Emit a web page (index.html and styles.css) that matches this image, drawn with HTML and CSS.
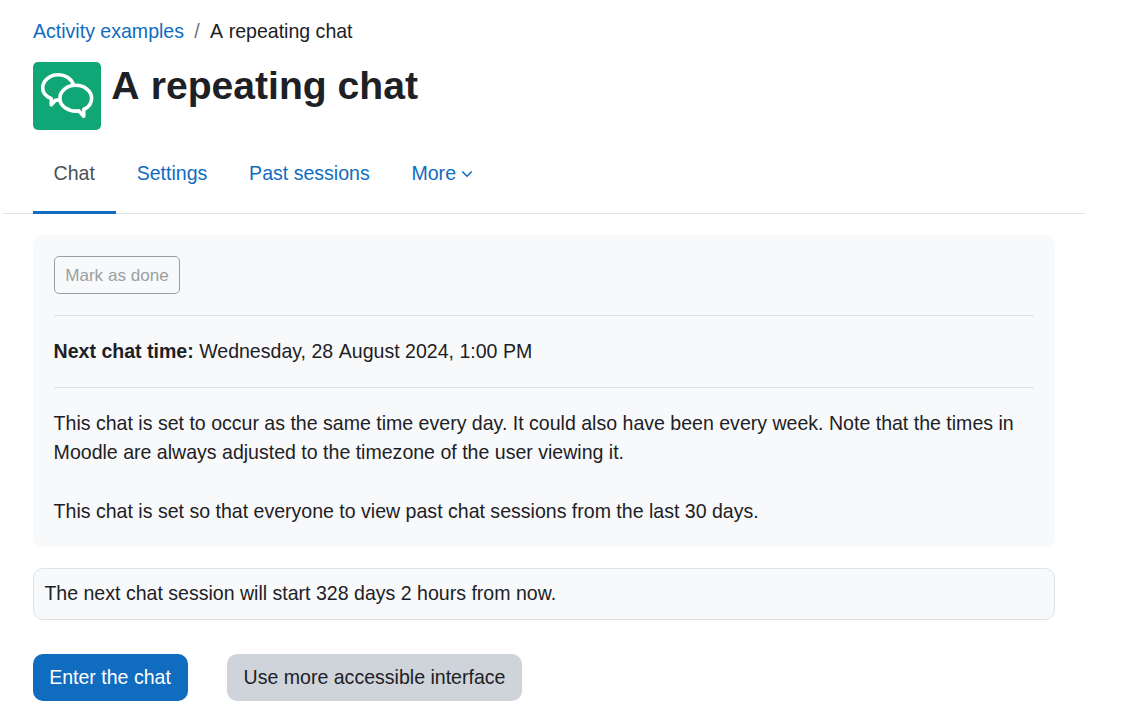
FILE: index.html
```html
<!DOCTYPE html>
<html lang="en">
<head>
<meta charset="utf-8">
<title>A repeating chat</title>
<link rel="stylesheet" href="styles.css">
</head>
<body>
<main class="page">
  <nav class="breadcrumb"><a href="#">Activity examples</a><span class="separator">/</span><span><span class="article">A</span> repeating chat</span></nav>
  <header class="heading">
    <span class="activity-icon">
      <svg viewBox="0 0 68 68" width="68" height="68" fill="none" stroke="#fff" stroke-width="3.6" stroke-linejoin="round">
        <path d="M27 37.500Q25 38.300 22.500 38.300L18.300 42.800L18.300 36.700C13 34.500 9.700 30.800 9.700 26C9.700 18.600 16.700 12.800 25.300 12.800C32.500 12.800 38.500 16.800 40.400 22.800"/>
        <path d="M42.700 23.300C51.500 23.300 58.600 29 58.600 36.200C58.600 41.300 55.500 45.300 50.700 47.500L50.700 54.300L45.800 48.900C35.500 50.200 26.900 44.200 26.900 36.200C26.900 29 34 23.300 42.700 23.300Z"/>
      </svg>
    </span>
    <h1><span class="article">A</span> repeating chat</h1>
  </header>
  <nav class="tabs">
    <a class="tab active" href="#">Chat</a>
    <a class="tab" href="#">Settings</a>
    <a class="tab" href="#">Past sessions</a>
    <a class="tab" href="#">More<svg class="chevron" viewBox="0 0 12 8" width="12" height="8" fill="none" stroke="currentColor" stroke-width="1.6"><path d="M1.300 1.500L6 6.200L10.700 1.500"/></svg></a>
  </nav>
  <section class="info">
    <button class="completion" disabled>Mark as done</button>
    <p class="dates"><strong>Next chat time:</strong> Wednesday, 28 <span class="month">August</span> 2024, 1:00 PM</p>
    <div class="description">
      <p>This chat is set to occur as the same time every day. It could also have been every week. Note that the times in Moodle are always adjusted to the timezone of the user viewing it.</p>
      <p>This chat is set so that everyone to view past chat sessions from the last 30 days.</p>
    </div>
  </section>
  <div class="notice">The next chat session will start 328 days 2 hours from now.</div>
  <div class="actions">
    <a class="button primary" href="#">Enter the chat</a>
    <a class="button secondary" href="#">Use more accessible interface</a>
  </div>
</main>
</body>
</html>
```
FILE: styles.css
```css
* { box-sizing: border-box; }
body {
  margin: 0;
  background: #fff;
  color: #1d2125;
  font: 19.56px/29.4px "Liberation Sans", Arial, sans-serif;
}
a { color: #0f6cbf; text-decoration: none; }
p, h1 { margin: 0; }
.page { width: 1055px; padding: 17px 0 0 33px; }
.breadcrumb { display: flex; height: 30px; }
.separator { width: 26px; text-align: center; color: #6a737b; }
.article { margin-right: 0.01em; }
.heading { display: flex; height: 68px; margin-top: 15px; gap: 10.2px; }
.activity-icon {
  width: 68px;
  height: 68px;
  border-radius: 5px;
  background: #11a676;
}
.activity-icon svg { display: block; }
h1 { font-size: 39.12px; line-height: 47px; }
.tabs {
  display: flex;
  height: 84px;
  margin: 0 -30px 21px;
  padding: 0 30px;
  border-bottom: 1px solid #dee2e6;
}
.tab { height: 84px; padding: 29px 20.9px 0; white-space: nowrap; }
.tab.active { padding-left: 20.6px; color: #495057; border-bottom: 3px solid #0f6cbf; }
.chevron { margin-left: 5px; vertical-align: 2px; }
.info {
  height: 312px;
  padding: 21px 21px 0;
  border-radius: 10px;
  background: #f8f9fa;
}
.completion {
  display: block;
  width: 126px;
  height: 38px;
  padding: 1px 0 0;
  border: 1px solid #9b9fa3;
  border-radius: 5px;
  background: transparent;
  color: #9b9fa3;
  font: 17.12px/26px "Liberation Sans", Arial, sans-serif;
}
.dates {
  height: 73px;
  margin-top: 21px;
  padding-top: 21px;
  border: solid #dee2e6;
  border-width: 1px 0;
  text-indent: -0.4px;
}
.month { margin-left: 0.01em; }
.description { margin-left: -0.4px; padding-top: 21px; }
.description p + p { margin-top: 29px; }
.notice {
  height: 52px;
  margin-top: 21px;
  padding: 10px 10.4px;
  border: 1px solid #dee2e6;
  border-radius: 10px;
  background: #f8f9fa;
}
.actions { display: flex; gap: 39px; margin-top: 34px; }
.button {
  height: 47px;
  padding: 9px 0 0;
  border-radius: 10px;
  text-align: center;
  white-space: nowrap;
}
.primary { width: 155px; padding-right: 1px; background: #0f6cbf; color: #fff; }
.secondary { width: 295px; background: #ced4da; color: #1d2125; }
```
